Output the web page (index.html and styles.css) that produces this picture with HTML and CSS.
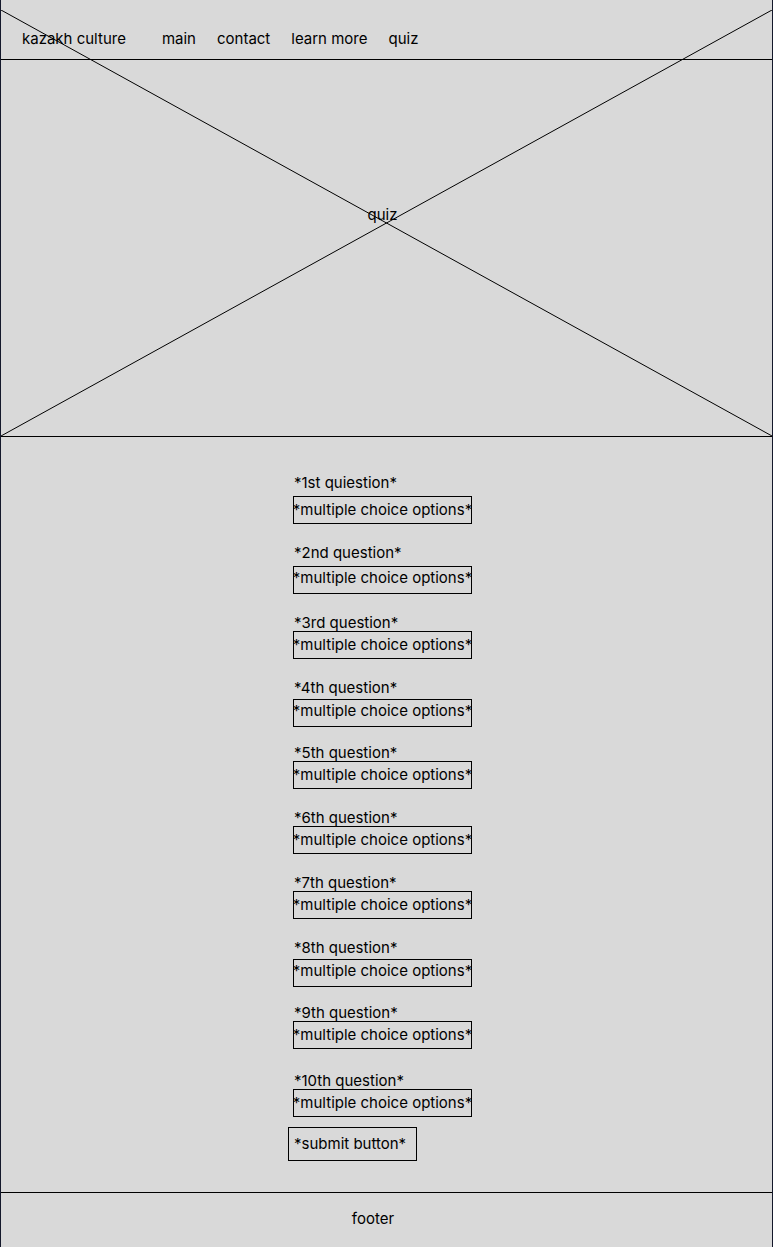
FILE: index.html
```html
<!DOCTYPE html>
<html lang="en">
<head>
<meta charset="utf-8">
<meta name="viewport" content="width=device-width, initial-scale=1">
<title>kazakh culture - quiz</title>
<link rel="stylesheet" href="styles.css">
</head>
<body>
<div class="page">
  <div class="banner">
    <svg class="banner-cross" viewBox="0 0 100 100" preserveAspectRatio="none" aria-hidden="true">
      <path d="M0 0L100 100M100 0L0 100" fill="none" stroke="#000" vector-effect="non-scaling-stroke"/>
    </svg>
    <header class="topbar">
      <a class="brand" href="#">kazakh culture</a>
      <nav class="menu">
        <a href="#">main</a>
        <a href="#">contact</a>
        <a href="#">learn more</a>
        <a href="#">quiz</a>
      </nav>
    </header>
    <h1 class="title">quiz</h1>
  </div>
  <main class="content">
    <form class="quiz">
      <section class="question roomy"><h2>*1st quiestion*</h2><p class="options">*multiple choice options*</p></section>
      <section class="question roomy high"><h2>*2nd question*</h2><p class="options">*multiple choice options*</p></section>
      <section class="question"><h2>*3rd question*</h2><p class="options">*multiple choice options*</p></section>
      <section class="question medium high"><h2>*4th question*</h2><p class="options">*multiple choice options*</p></section>
      <section class="question near"><h2>*5th question*</h2><p class="options">*multiple choice options*</p></section>
      <section class="question"><h2>*6th question*</h2><p class="options">*multiple choice options*</p></section>
      <section class="question"><h2>*7th question*</h2><p class="options">*multiple choice options*</p></section>
      <section class="question medium high"><h2>*8th question*</h2><p class="options">*multiple choice options*</p></section>
      <section class="question near"><h2>*9th question*</h2><p class="options">*multiple choice options*</p></section>
      <section class="question far"><h2>*10th question*</h2><p class="options">*multiple choice options*</p></section>
      <button class="submit" type="submit">*submit button*</button>
    </form>
  </main>
  <footer class="footer">footer</footer>
</div>
</body>
</html>
```
FILE: styles.css
```css
* {
  box-sizing: border-box;
}

body {
  margin: 0;
  background: #d9d9d9;
  color: #000;
  font: 15px/16px Inter, "Liberation Sans", sans-serif;
}

h1,
h2,
p {
  margin: 0;
  font-size: inherit;
  font-weight: 400;
}

a {
  color: inherit;
  text-decoration: none;
}

.page {
  display: flex;
  flex-direction: column;
  min-height: 100vh;
  border: solid #14182b;
  border-width: 0 1px;
}

.banner {
  position: relative;
  border-bottom: 1px solid #000;
}

.banner-cross {
  position: absolute;
  top: 10px;
  left: 0;
  width: 100%;
  height: calc(100% - 10px);
  pointer-events: none;
}

.topbar {
  display: flex;
  flex-wrap: wrap;
  gap: 36px;
  padding: 31px 21px 12px;
  border-bottom: 1px solid #000;
}

.menu {
  display: flex;
  flex-wrap: wrap;
  gap: 21px;
}

.title {
  padding: 147px 8px 213px 0;
  text-align: center;
}

.content {
  flex: 1;
  padding: 38px 0 31px;
}

.quiz {
  display: flex;
  flex-direction: column;
  align-items: flex-start;
  width: 197px;
  margin: 0 auto;
}

.question {
  display: flex;
  flex-direction: column;
  margin: 21px 0 0 5px;
}

.question:first-child {
  margin-top: 0;
}

.question.near {
  margin-top: 18px;
}

.question.far {
  margin-top: 24px;
}

.question h2 {
  padding-left: 1px;
}

.roomy {
  gap: 5px;
}

.medium {
  gap: 3px;
}

.options {
  display: flex;
  align-items: center;
  justify-content: center;
  width: 179px;
  height: 28px;
  border: 1px solid #000;
  white-space: nowrap;
}

.high .options {
  padding-bottom: 4px;
}

.submit {
  margin-top: 10px;
  padding: 8px;
  width: 129px;
  padding-left: 5px;
  border: 1px solid #000;
  background: none;
  color: inherit;
  font: inherit;
  text-align: left;
  cursor: pointer;
}

.footer {
  padding: 18px 27px 20px 0;
  border-top: 1px solid #000;
  text-align: center;
}
```
